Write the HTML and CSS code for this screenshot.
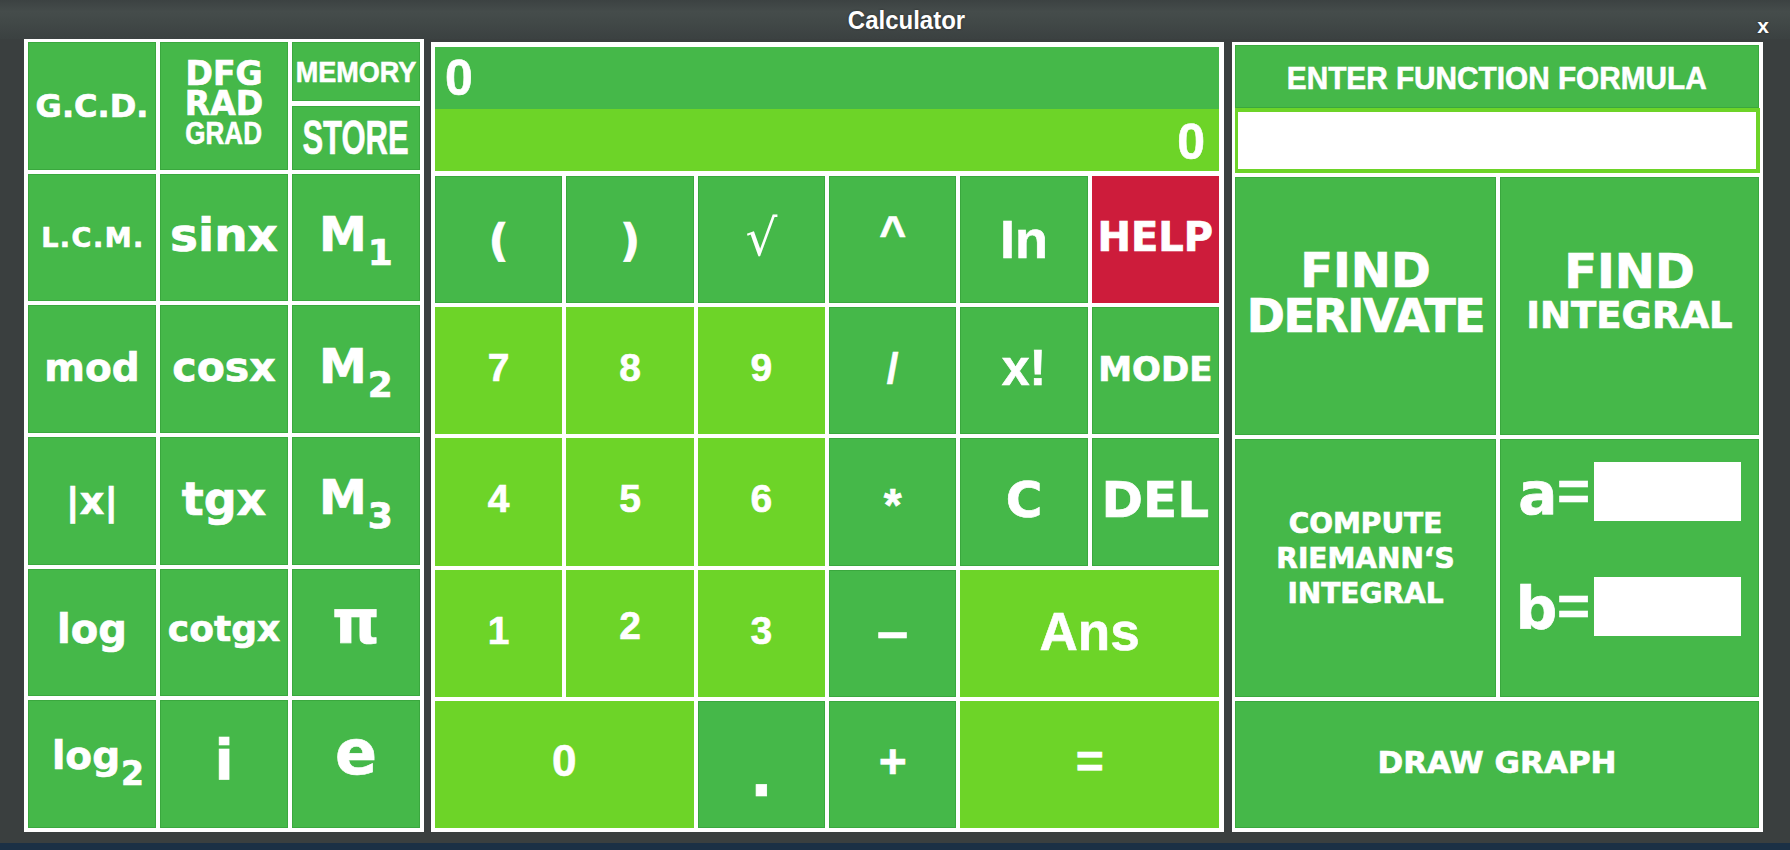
FILE: index.html
```html
<!DOCTYPE html>
<html>
<head>
<meta charset="utf-8">
<title>Calculator</title>
<link rel="stylesheet" href="styles.css">
</head>
<body>
<div class="titlebar">
  <span></span>
  <span class="title">Calculator</span>
  <span class="close">x</span>
</div>
<div class="main">
  <div class="panel left">
    <div class="cell"><span class="dv s-gcd">G.C.D.</span></div>
    <div class="cell stack">
      <span class="dv s-dfg">DFG</span>
      <span class="dv s-dfg">RAD</span>
      <span class="lb s-grad">GRAD</span>
    </div>
    <div class="split">
      <div class="cell"><span class="lb s-memory">MEMORY</span></div>
      <div class="cell grow"><span class="lb s-store">STORE</span></div>
    </div>

    <div class="cell"><span class="dv s-lcm">L.C.M.</span></div>
    <div class="cell"><span class="dv s-sinx">sinx</span></div>
    <div class="cell"><span class="dv s-m">M<span class="sub">1</span></span></div>

    <div class="cell"><span class="dv s-mod">mod</span></div>
    <div class="cell"><span class="dv s-cosx">cosx</span></div>
    <div class="cell"><span class="dv s-m">M<span class="sub">2</span></span></div>

    <div class="cell"><span class="dv s-abs">|x|</span></div>
    <div class="cell"><span class="dv s-tgx">tgx</span></div>
    <div class="cell"><span class="dv s-m">M<span class="sub">3</span></span></div>

    <div class="cell"><span class="dv s-log">log</span></div>
    <div class="cell"><span class="dv s-cotgx">cotgx</span></div>
    <div class="cell"><span class="dv s-pi">π</span></div>

    <div class="cell"><span class="dv s-log2">log<span class="sub2">2</span></span></div>
    <div class="cell"><span class="dv s-i">i</span></div>
    <div class="cell"><span class="dv s-e">e</span></div>
  </div>

  <div class="panel mid">
    <div class="display">
      <div class="disp-top lb">0</div>
      <div class="disp-bot lb">0</div>
    </div>
    <div class="keys">
      <div class="cell"><span class="dv s-paren">(</span></div>
      <div class="cell"><span class="dv s-paren">)</span></div>
      <div class="cell"><span class="s-sqrt">√</span></div>
      <div class="cell"><span class="lb s-caret">^</span></div>
      <div class="cell"><span class="lb s-ln">In</span></div>
      <div class="cell red"><span class="dv s-help">HELP</span></div>

      <div class="cell lt"><span class="lb s-digit">7</span></div>
      <div class="cell lt"><span class="lb s-digit">8</span></div>
      <div class="cell lt"><span class="lb s-digit">9</span></div>
      <div class="cell"><span class="lb s-slash">/</span></div>
      <div class="cell"><span class="lb s-fact">x!</span></div>
      <div class="cell"><span class="dv s-mode">MODE</span></div>

      <div class="cell lt"><span class="lb s-digit">4</span></div>
      <div class="cell lt"><span class="lb s-digit">5</span></div>
      <div class="cell lt"><span class="lb s-digit">6</span></div>
      <div class="cell"><span class="lb s-star">*</span></div>
      <div class="cell"><span class="dv s-c">C</span></div>
      <div class="cell"><span class="dv s-c">DEL</span></div>

      <div class="cell lt"><span class="lb s-digit">1</span></div>
      <div class="cell lt"><span class="lb s-digit up">2</span></div>
      <div class="cell lt"><span class="lb s-digit">3</span></div>
      <div class="cell"><span class="lb s-minus">–</span></div>
      <div class="cell lt span2"><span class="lb s-ans">Ans</span></div>

      <div class="cell lt span2"><span class="lb s-zero">0</span></div>
      <div class="cell"><span class="dv s-dot">.</span></div>
      <div class="cell"><span class="lb s-plus">+</span></div>
      <div class="cell lt span2"><span class="lb s-plus">=</span></div>
    </div>
  </div>

  <div class="panel right">
    <div class="cell rhead"><span class="lb s-enter">ENTER FUNCTION FORMULA</span></div>
    <div class="rinput"></div>
    <div class="rgrid">
      <div class="cell stack find">
        <span class="dv s-find">FIND</span>
        <span class="dv s-deriv">DERIVATE</span>
      </div>
      <div class="cell stack find">
        <span class="dv s-find">FIND</span>
        <span class="dv s-integ">INTEGRAL</span>
      </div>
      <div class="cell stack riemann">
        <span class="dv s-riem">COMPUTE</span>
        <span class="dv s-riem">RIEMANN‘S</span>
        <span class="dv s-riem">INTEGRAL</span>
      </div>
      <div class="cell bounds">
        <div class="bound"><span class="dv s-var">a</span><span class="lb s-eq">=</span><div class="box"></div></div>
        <div class="bound"><span class="dv s-var">b</span><span class="lb s-eq">=</span><div class="box"></div></div>
      </div>
      <div class="cell span2"><span class="dv s-draw">DRAW GRAPH</span></div>
    </div>
  </div>
</div>
<div class="taskbar"></div>
</body>
</html>
```

FILE: styles.css
```css
* { box-sizing: border-box; }

html, body {
  margin: 0;
  padding: 0;
}

body {
  width: 1790px;
  height: 850px;
  overflow: hidden;
  background: #3a3f3f;
  color: #ffffff;
  font-family: "Liberation Sans", Arial, sans-serif;
}

.dv {
  font-family: "DejaVu Sans", sans-serif;
  font-weight: bold;
  -webkit-text-stroke: 0.7px #ffffff;
}
.lb {
  font-family: "Liberation Sans", Arial, sans-serif;
  font-weight: bold;
  -webkit-text-stroke: 0.6px #ffffff;
}

/* ---------- title bar ---------- */
.titlebar {
  height: 39px;
  display: grid;
  grid-template-columns: 1fr auto 1fr;
  padding: 0 21px 0 44px;
  background: linear-gradient(#3c4242 0%, #454c4b 30%, #414847 60%, #3b4141 100%);
}
.title {
  font-family: "Liberation Sans", Arial, sans-serif;
  font-weight: bold;
  font-size: 24px;
  line-height: 24px;
  margin-top: 9px;
  display: inline-block;
  transform: scaleY(1.05);
  text-shadow: 0 0 2px #222;
}
.close {
  justify-self: end;
  font-family: "Liberation Sans", Arial, sans-serif;
  font-weight: bold;
  font-size: 21px;
  line-height: 16px;
  margin-top: 18px;
  text-shadow: 0 0 2px #222;
}

/* ---------- main layout ---------- */
.main {
  display: flex;
  align-items: flex-end;
  height: 793px;
  padding-left: 24px;
}
.panel {
  background: #ffffff;
  flex: none;
}
.cell {
  background: #45b849;
  box-shadow: inset 0 0 0 1px #3aa83e;
  display: flex;
  align-items: center;
  justify-content: center;
  line-height: 1;
  white-space: nowrap;
  min-width: 0;
  min-height: 0;
  overflow: visible;
}
.cell.lt { background: #6dd428; box-shadow: none; }
.cell.red { background: #cd1c3b; box-shadow: none; }
.span2 { grid-column: span 2; }
.stack { flex-direction: column; }

/* ---------- left panel ---------- */
.left {
  width: 400px;
  height: 793px;
  padding: 3px 4px 4px 4px;
  display: grid;
  grid-template-columns: repeat(3, minmax(0, 1fr));
  grid-template-rows: repeat(6, minmax(0, 1fr));
  gap: 4px;
}
.split {
  display: flex;
  flex-direction: column;
  gap: 5px;
  min-width: 0;
}
.split > .cell:first-child { height: 59px; flex: none; }
.split > .grow { flex: 1; }

.s-gcd { font-size: 32px; }
.s-dfg { font-size: 33px; line-height: 30px; }
.s-grad { font-size: 31px; line-height: 30px; display: inline-block; transform: scaleX(0.84); }
.stack .s-dfg:first-child { margin-top: -4px; }
.s-memory { font-size: 30px; display: inline-block; transform: scaleX(0.9); }
.s-store { font-size: 47px; display: inline-block; transform: scaleX(0.66) scaleY(1.02); }
.s-lcm { font-size: 27px; letter-spacing: 1.5px; margin-left: 2px; }
.s-sinx { font-size: 47px; margin-top: -6px; }
.s-m { font-size: 48px; margin-top: 6px; }
.sub { font-size: 36px; vertical-align: -14px; margin-left: 1px; }
.s-mod { font-size: 39px; margin-top: -4px; }
.s-cosx { font-size: 41px; margin-top: -4px; }
.s-abs { font-size: 38px; }
.s-tgx { font-size: 46px; margin-top: -4px; }
.s-log { font-size: 40px; margin-top: -6px; }
.s-cotgx { font-size: 36px; margin-top: -6px; }
.s-pi { font-size: 60px; margin-top: -20px; }
.s-log2 { font-size: 39px; margin-top: -2px; margin-left: 12px; }
.sub2 { font-size: 33px; vertical-align: -16px; margin-left: 1px; }
.s-i { font-size: 56px; margin-top: -8px; }
.s-e { font-size: 62px; margin-top: -22px; }

/* ---------- middle panel ---------- */
.mid {
  width: 793px;
  height: 790px;
  margin-left: 7px;
  padding: 5px 5px 4px 4px;
  display: flex;
  flex-direction: column;
}
.display {
  height: 124px;
  margin-bottom: 5px;
  display: flex;
  flex-direction: column;
}
.disp-top {
  height: 62px;
  background: #45b849;
  font-size: 50px;
  line-height: 62px;
  padding-left: 10px;
}
.disp-bot {
  height: 62px;
  background: #6dd428;
  font-size: 50px;
  line-height: 62px;
  text-align: right;
  padding-right: 14px;
  padding-top: 2px;
}
.keys {
  flex: 1;
  display: grid;
  grid-template-columns: repeat(6, minmax(0, 1fr));
  grid-template-rows: repeat(5, minmax(0, 1fr));
  gap: 4px;
}
.s-paren { font-size: 44px; margin-top: 2px; }
.s-sqrt { font-family: "DejaVu Sans", sans-serif; font-size: 50px; font-weight: normal; margin-top: -4px; }
.s-caret { font-size: 46px; margin-top: -14px; }
.s-ln { font-size: 54px; margin-top: -2px; }
.s-help { font-size: 40px; margin-top: -6px; }
.s-digit { font-size: 39px; margin-top: -6px; }
.s-digit.up { margin-top: -16px; }
.s-slash { font-size: 42px; margin-top: -4px; }
.s-fact { font-size: 50px; margin-top: -6px; }
.s-mode { font-size: 34px; margin-top: -4px; }
.s-star { font-size: 46px; margin-top: 6px; }
.s-c { font-size: 50px; margin-top: -4px; }
.s-minus { font-size: 56px; margin-top: -4px; }
.s-ans { font-size: 53px; margin-top: -4px; }
.s-zero { font-size: 44px; margin-top: -6px; }
.s-dot { font-size: 60px; margin-top: 22px; }
.s-plus { font-size: 48px; margin-top: -4px; }

/* ---------- right panel ---------- */
.right {
  width: 531px;
  height: 790px;
  margin-left: 8px;
  padding: 3px 4px 4px 3px;
  display: flex;
  flex-direction: column;
}
.rhead { height: 63px; flex: none; }
.s-enter { font-size: 32px; display: inline-block; transform: scaleX(0.93); margin-top: 2px; }
.rinput {
  height: 65px;
  flex: none;
  background: #ffffff;
  border: 4px solid #6dd428;
  border-left-width: 3px;
  margin-right: -1px;
}
.rgrid {
  flex: 1;
  margin-top: 4px;
  display: grid;
  grid-template-columns: 261px minmax(0, 1fr);
  grid-template-rows: 258px 258px minmax(0, 1fr);
  gap: 4px;
}
.find { padding-bottom: 26px; }
.s-find { font-size: 48px; line-height: 46px; }
.s-deriv { font-size: 46px; line-height: 46px; letter-spacing: -1.5px; }
.s-integ { font-size: 37px; line-height: 44px; }
.riemann { padding-bottom: 20px; }
.s-riem { font-size: 28px; line-height: 35px; }
.bounds {
  flex-direction: column;
  align-items: flex-end;
  justify-content: center;
  gap: 53px;
  padding: 0 18px 38px 0;
}
.bound {
  display: flex;
  align-items: center;
}
.s-var { font-size: 58px; line-height: 58px; margin-top: 4px; }
.s-eq { font-size: 56px; line-height: 58px; margin-right: 4px; margin-top: -2px; }
.box {
  width: 147px;
  height: 59px;
  background: #ffffff;
}
.s-draw { font-size: 31px; margin-top: -4px; }

/* ---------- bottom strip ---------- */
.taskbar {
  margin-top: 11px;
  height: 7px;
  background: #1b3045;
}
```
